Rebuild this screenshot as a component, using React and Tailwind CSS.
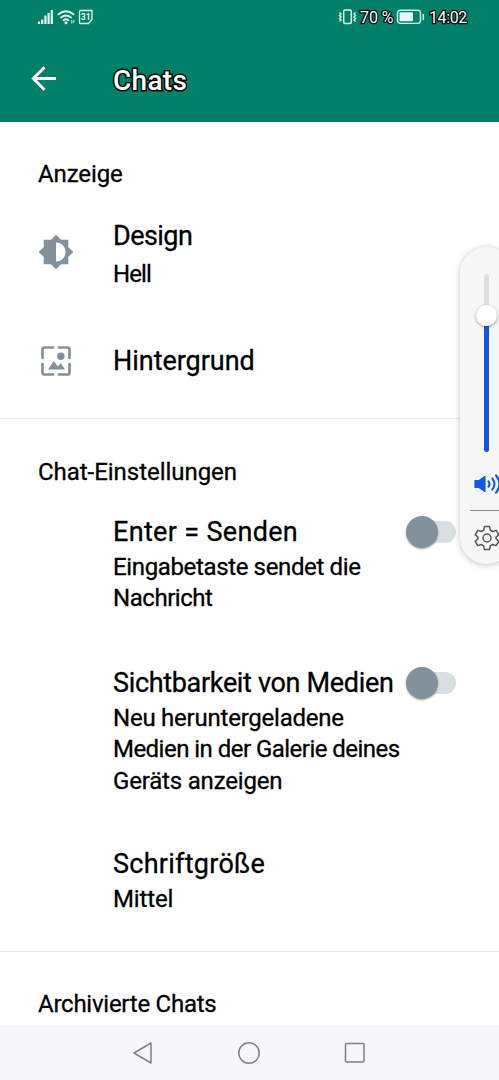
import React from "react";

function StatusBar() {
  return (
    <div className="flex h-[34px] items-center pl-[37px] pr-[29px] text-white">
      <svg width="58" height="18" viewBox="0 0 58 18" fill="none" stroke="#e3f7f2">
        <path d="M2 16v-2.5M5.2 16v-4.500M8.400 16V7.500M11.600 16V5M14.800 16V2" strokeWidth="2.200" />
        <path d="M21.500 6.200q7.500-6 15 0M24 9.400q5-4 10 0M26.600 12.200q2.400-1.800 4.800 0" strokeWidth="1.900" strokeLinecap="round" />
        <circle cx="29" cy="14.800" r="1.500" fill="#e3f7f2" stroke="none" />
        <path d="M34.800 12v3.500M36.800 12.200v2.600" strokeWidth="1" />
        <path d="M43.500 2.500h11.500v9l-3.500 4h-8q-1 0-1-1v-11q0-1 1-1z" strokeWidth="1.300" />
        <text x="48.700" y="12.200" textAnchor="middle" fontSize="8.500" fontWeight="700" fontFamily="Roboto, sans-serif" fill="#e3f7f2" stroke="none">31</text>
      </svg>
      <svg className="ml-auto" width="19" height="16" viewBox="0 0 19 16" fill="none" stroke="#d9f5ee">
        <rect x="5.700" y="1" width="7.600" height="13.400" rx="1.500" strokeWidth="1.500" />
        <path d="M1.500 3.500l1.500 1.500-1.500 1.500 1.500 1.500-1.500 1.500 1.500 1.500-1.500 1.500M17.500 3.500l-1.500 1.500 1.500 1.500-1.500 1.500 1.500 1.500-1.500 1.500 1.500 1.500" strokeWidth="1.400" />
      </svg>
      <span className="ml-[3px] mt-[2px] w-[36px] whitespace-nowrap text-[16px] leading-5 tracking-[-0.1px] [-webkit-text-stroke:2.5px_black] [paint-order:stroke_fill]">
        70 %
      </span>
      <svg width="29" height="16" viewBox="0 0 29 16" fill="none" stroke="#c9efe6">
        <rect x="1.500" y="1.200" width="23" height="13.200" rx="2.800" strokeWidth="1.400" />
        <rect x="3.500" y="3.300" width="13.500" height="9" rx="1" fill="#e3f7f2" stroke="none" />
        <path d="M27.300 5v6" strokeWidth="1.600" />
      </svg>
      <span className="ml-[4px] mt-[2px] w-[41px] whitespace-nowrap text-[16px] leading-5 tracking-[-0.4px] [-webkit-text-stroke:2.5px_black] [paint-order:stroke_fill]">
        14:02
      </span>
    </div>
  );
}

function Header() {
  return (
    <header className="h-[122px] bg-[#008069]">
      <StatusBar />
      <div className="flex h-[90px] items-center pl-[30px]">
        <svg width="28" height="28" viewBox="0 0 28 28" fill="none" stroke="white" strokeWidth="2.900">
          <path d="M26 13.500H3.500M14.500 2.300L3.300 13.500l11.200 11.200" />
        </svg>
        <h1 className="ml-[55px] mt-[3px] text-[28px] font-medium leading-9 tracking-[0.3px] text-white [-webkit-text-stroke:3px_black] [paint-order:stroke_fill]">
          Chats
        </h1>
      </div>
    </header>
  );
}

function Switch() {
  return (
    <div className="flex h-9 w-[52px] shrink-0 items-center">
      <div className="z-10 size-8 rounded-full bg-[#82929d] shadow-[0_1px_2px_rgba(0,0,0,0.35)]" />
      <div className="-ml-4 h-[22px] w-[34px] rounded-r-full bg-[#d9dfe1]" />
    </div>
  );
}

function BrightnessIcon() {
  return (
    <svg className="-mt-[3px]" width="36" height="36" viewBox="0 0 36 36" fill="#82929d">
      <path
        fillRule="evenodd"
        d="M18 .7l5 5h7.300v7.300l5 5-5 5v7.300H23l-5 5-5-5H5.700V23l-5-5 5-5V5.700H13zM18 8.500v19c5.500 0 9.500-4 9.500-9.500S23.500 8.500 18 8.500z"
      />
    </svg>
  );
}

function WallpaperIcon() {
  return (
    <svg className="-mt-px" width="32" height="32" viewBox="0 0 32 32" fill="none" stroke="#82929d" strokeWidth="2.700" strokeLinecap="round">
      <path d="M2.500 13V4.500q0-2 2-2H13M19 2.500h8.500q2 0 2 2V13M29.500 19v8.500q0 2-2 2H19M13 29.500H4.500q-2 0-2-2V19" />
      <circle cx="20.800" cy="11.300" r="3.800" fill="#82929d" stroke="none" />
      <path d="M8 24.500l5.700-8.500 4.300 5.500 2.700-3.500 4.300 6.500z" fill="#82929d" stroke="none" />
    </svg>
  );
}

function VolumePanel() {
  return (
    <aside className="absolute left-[460px] top-[247px] flex h-[317px] w-[53px] flex-col items-center rounded-[27px] bg-[#f7f7f7] pt-[27px] shadow-[0_1px_6px_rgba(0,0,0,0.25)]">
      <div className="h-[31px] w-[5px] rounded-t bg-[#dedede]" />
      <div className="z-10 size-[21px] rounded-full bg-white shadow-[0_1px_3px_rgba(0,0,0,0.4)]" />
      <div className="h-[126px] w-[5px] rounded-b bg-[#1157ee]" />
      <svg className="mt-[21px]" width="28" height="22" viewBox="0 0 28 22" fill="none" stroke="#1157ee" strokeWidth="2.100" strokeLinecap="round">
        <path d="M2 7.500h4l6-4v15l-6-4H2z" fill="#1157ee" strokeWidth="1.200" strokeLinejoin="round" />
        <path d="M15.500 8.300q2 2.700 0 5.400M19.300 5.300q4.400 5.700 0 11.400M23 2.300q7 8.700 0 17.400" />
      </svg>
      <div className="mt-[15px] h-px w-[34px] bg-[#858585]" />
      <svg className="mt-[14px]" width="26" height="26" viewBox="0 0 26 26" fill="none" stroke="#555" strokeWidth="1.500" strokeLinejoin="round">
        <path d="M10.500 1.500h5l.8 3.600 2.400 1.400 3.500-1.100 2.500 4.300-2.700 2.500v1.600l2.700 2.500-2.500 4.300-3.500-1.100-2.400 1.400-.8 3.600h-5l-.8-3.600-2.400-1.400-3.500 1.100-2.500-4.300L4 13.800v-1.600L1.300 9.700l2.500-4.300 3.500 1.100 2.400-1.400z" />
        <circle cx="13" cy="13" r="4" />
      </svg>
    </aside>
  );
}

function NavBar() {
  return (
    <nav className="flex h-[55px] shrink-0 items-center justify-between bg-[#f6f7f9] pl-[132px] pr-[133px]">
      <svg width="22" height="24" viewBox="0 0 22 24" fill="none" stroke="#808183" strokeWidth="1.500" strokeLinejoin="round">
        <path d="M19 2v20L2 12z" />
      </svg>
      <svg width="24" height="24" viewBox="0 0 24 24" fill="none" stroke="#808183" strokeWidth="1.500">
        <circle cx="12" cy="12" r="10.200" />
      </svg>
      <svg width="22" height="22" viewBox="0 0 22 22" fill="none" stroke="#808183" strokeWidth="1.500">
        <rect x="1.500" y="1.500" width="18.500" height="18.500" rx="1" />
      </svg>
    </nav>
  );
}

export default function App() {
  return (
    <div className="relative flex h-[1080px] w-[499px] flex-col overflow-hidden bg-white font-[Roboto,sans-serif] text-black">
      <Header />

      <main className="flex-1 overflow-hidden whitespace-nowrap text-[24px] leading-[31.500px] [-webkit-text-stroke:0.3px_black]">
        <section className="h-[297px] border-b border-[#e9ebec] pl-[38px] pt-[37px]">
          <h2 className="tracking-[-0.1px]">Anzeige</h2>
          <div className="mt-[27px] flex items-center">
            <div className="w-[75px]">
              <BrightnessIcon />
            </div>
            <div>
              <p className="text-[27px] leading-9 tracking-[-0.55px]">Design</p>
              <p className="mt-[5px] tracking-[-0.9px]">Hell</p>
            </div>
          </div>
          <div className="mt-[53px] flex items-center">
            <div className="w-[75px] pl-[2px]">
              <WallpaperIcon />
            </div>
            <p className="text-[27px] leading-9 tracking-[-0.03px]">Hintergrund</p>
          </div>
        </section>

        <section className="h-[533px] border-b border-[#e3e6e7] pl-[38px] pt-[38px]">
          <h2 className="tracking-[-0.04px]">Chat-Einstellungen</h2>
          <div className="mt-[25px] flex pl-[75px]">
            <div className="w-[293px]">
              <p className="text-[27px] leading-9 tracking-[0.33px]">Enter = Senden</p>
              <p className="mt-[2px]">
                <span className="tracking-[-0.36px]">Eingabetaste sendet die</span>
                <br />
                <span className="tracking-[-0.45px]">Nachricht</span>
              </p>
            </div>
            <Switch />
          </div>
          <div className="mt-[50px] flex pl-[75px]">
            <div className="w-[293px]">
              <p className="text-[27px] leading-9 tracking-[-0.33px]">Sichtbarkeit von Medien</p>
              <p className="mt-[2px]">
                <span className="tracking-[-0.23px]">Neu heruntergeladene</span>
                <br />
                <span className="tracking-[-0.53px]">Medien in der Galerie deines</span>
                <br />
                <span className="tracking-[-0.18px]">Geräts anzeigen</span>
              </p>
            </div>
            <Switch />
          </div>
          <div className="mt-[49px] pl-[75px]">
            <p className="text-[27px] leading-9 tracking-[0.27px]">Schriftgröße</p>
            <p className="mt-[2px] tracking-[-0.15px]">Mittel</p>
          </div>
        </section>

        <section className="pl-[38px] pt-[37px]">
          <h2 className="tracking-[-0.25px]">Archivierte Chats</h2>
        </section>
      </main>

      <NavBar />
      <VolumePanel />
    </div>
  );
}
